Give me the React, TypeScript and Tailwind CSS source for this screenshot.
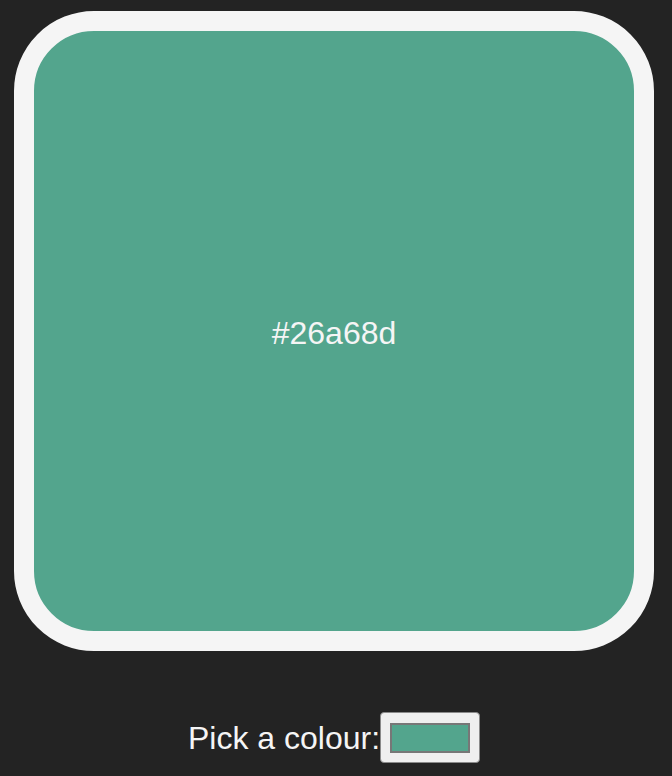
import { useState } from "react";

export default function App() {
  const [colour, setColour] = useState("#26a68d");

  return (
    <div className="min-h-screen bg-[#232323] flex flex-col items-center pr-1 pt-[11px] font-['Liberation_Sans',Arial,sans-serif] text-[#f5f5f5]">
      {/* Swatch card */}
      <div className="w-[640px] h-[640px] rounded-[80px] border-[20px] border-[#f5f5f5] bg-[#53a58d] flex items-center justify-center">
        <span className="text-[32px] leading-none pt-1">{colour}</span>
      </div>

      {/* Picker row */}
      <label className="mt-[61px] flex items-center text-[32px] leading-none">
        Pick a colour:
        <span className="relative w-[100px] h-[51px] rounded-[4px] border border-[#8a8a8a] bg-[#efefef] flex items-center justify-center">
          <span className="w-[80px] h-[30px] border-2 border-[#777] bg-[#53a58d]" />
          <input
            type="color"
            value={colour}
            onChange={(e) => setColour(e.target.value)}
            className="absolute inset-0 opacity-0 w-full h-full cursor-pointer"
          />
        </span>
      </label>
    </div>
  );
}
